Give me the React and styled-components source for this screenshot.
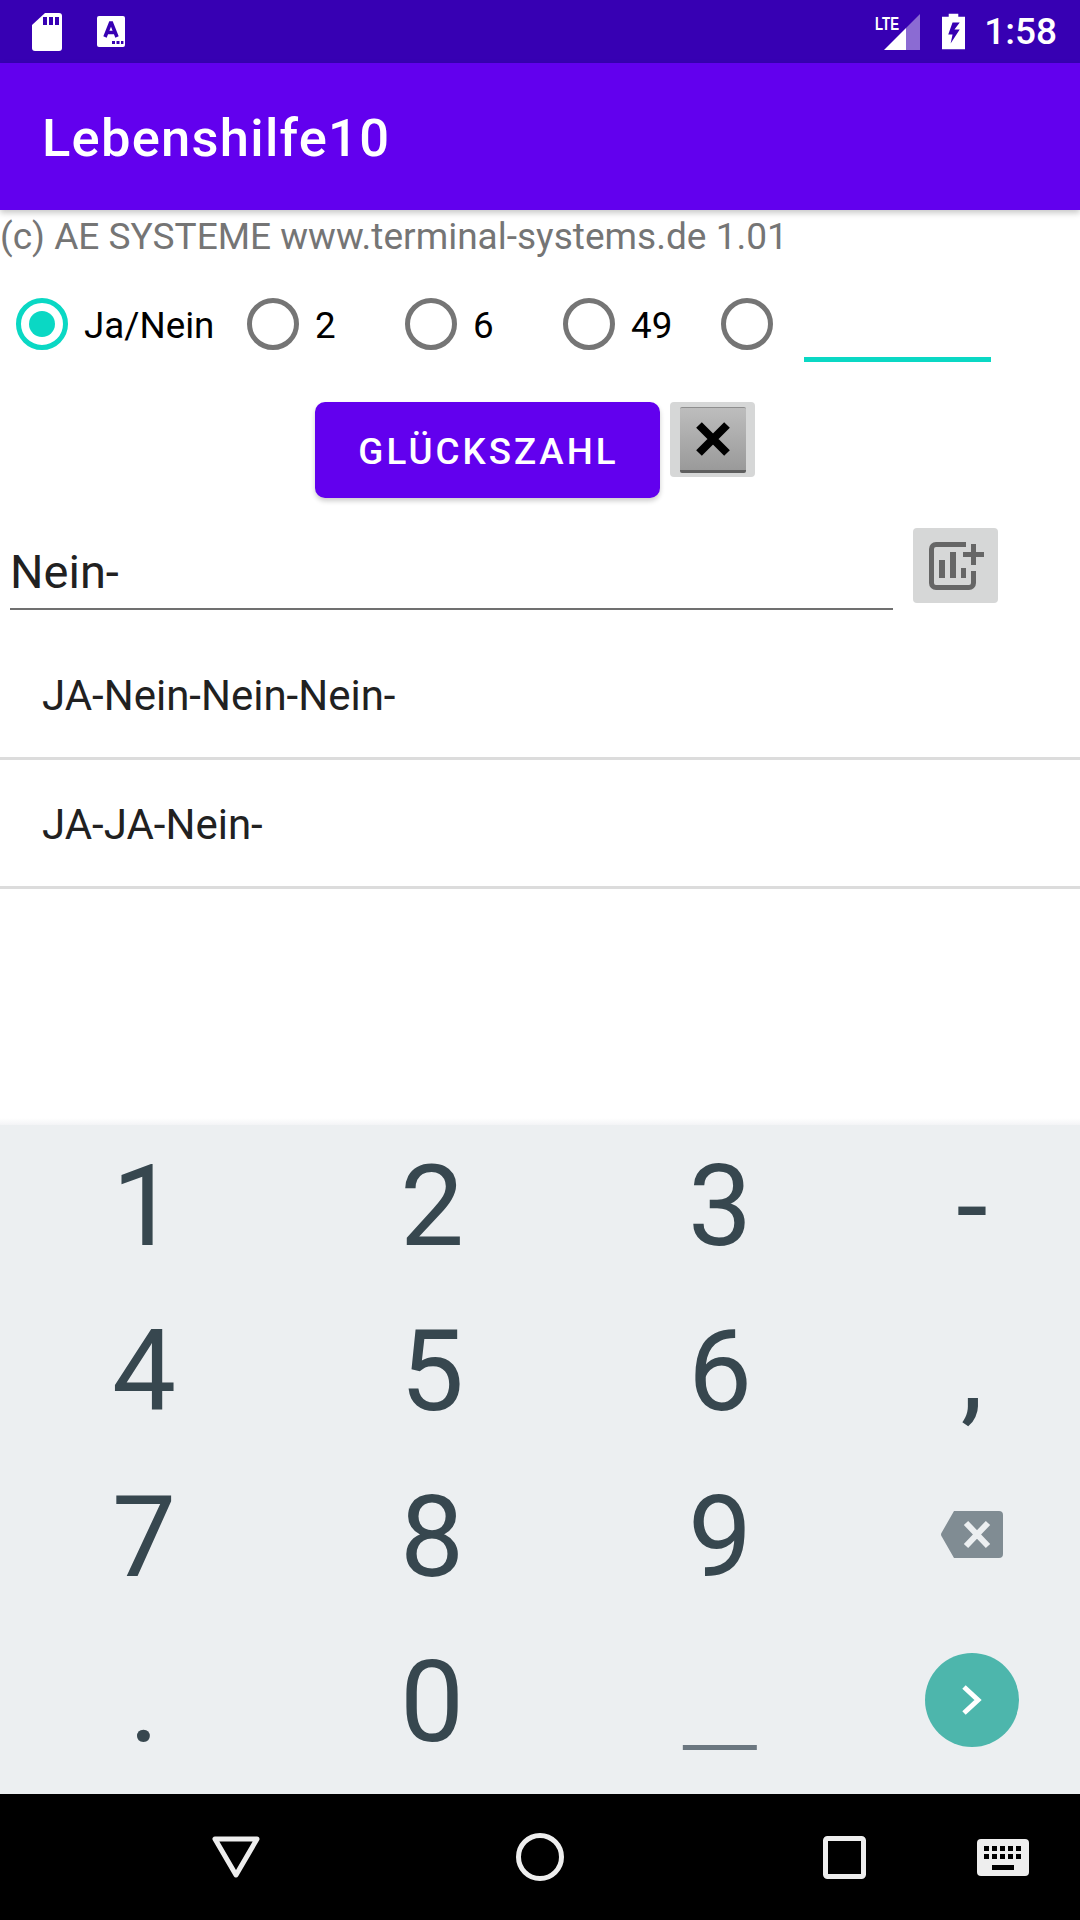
import React from "react";
import styled, { createGlobalStyle } from "styled-components";

const Global = createGlobalStyle`
  html, body { margin: 0; padding: 0; background: #fff; }
  body { font-family: Roboto, "Liberation Sans", sans-serif; }
  * { box-sizing: border-box; }
`;
const Screen = styled.div`
  width: 1080px; height: 1920px; display: flex; flex-direction: column; overflow: hidden; background: #fff;
`;
const StatusBar = styled.div`
  height: 63px; flex: none; background: #3700b3; display: flex; align-items: center; padding: 0 23px 0 32px; color: #fff;
`;
const StatusLeft = styled.div`display: flex; align-items: center; gap: 35px; flex: 1;`;
const StatusTime = styled.span`font-size: 37px; font-weight: 500; margin-left: 19px; line-height: 63px;`;
const StatusIcons = styled.div`display: flex; align-items: center; gap: 22px;`;
const AppBar = styled.div`
  height: 147px; flex: none; background: #6200ee; display: flex; align-items: center; padding: 3px 0 0 42px;
  color: #fff; font-size: 52.5px; font-weight: 500; letter-spacing: 1.25px;
  box-shadow: 0 3px 6px rgba(0,0,0,0.22); position: relative; z-index: 1;
`;
const Content = styled.div`flex: 1; display: flex; flex-direction: column; min-height: 0; background: #fff;`;
const Caption = styled.div`
  font-size: 37.05px; line-height: 44px; color: #757575; padding: 5px 0 0 0; height: 49px; white-space: nowrap;
`;
const RadioRow = styled.div`display: flex; align-items: center; height: 84px; margin-top: 23px;`;
const RadioItem = styled.div`
  display: flex; align-items: center; width: ${p => p.$w}px; flex: none; font-size: 36.75px; color: #000;
`;
const RadioLabel = styled.span`padding-top: 2px;`;
const RadioBox = styled.div`width: 84px; height: 84px; flex: none; display: flex; align-items: center; justify-content: center;`;
const RadioCircle = styled.div`
  width: 52px; height: 52px; border-radius: 50%; border: 5px solid ${p => (p.$on ? "#0ad8c4" : "#757575")};
  display: flex; align-items: center; justify-content: center;
`;
const RadioDot = styled.div`width: 26px; height: 26px; border-radius: 50%; background: #0ad8c4;`;
const Underline = styled.div`width: 187px; height: 5px; background: #0ad8c4; align-self: flex-start; margin: 75px 0 0 15px;`;
const ButtonRow = styled.div`display: flex; margin-top: 36px; padding-left: 315px; gap: 10px; align-items: flex-start;`;
const Primary = styled.div`
  width: 345px; height: 96px; border-radius: 10px; background: #6200ee; color: #fff; font-size: 36.75px; font-weight: 500;
  letter-spacing: 3px; padding: 2px 0 0 2px; display: flex; align-items: center; justify-content: center;
  box-shadow: 0 3px 5px rgba(0,0,0,0.2);
`;
const IconButton = styled.div`
  width: 85px; height: 75px; background: #d6d7d7; border-radius: 4px; display: flex; align-items: center; justify-content: center; flex: none;
`;
const CloseFace = styled.div`
  width: 66px; height: 66px; border-radius: 2px; background: linear-gradient(#bdbdbd, #9a9a9a);
  border-bottom: 3px solid #5e5e5e; border-top: 1px solid #8e8e8e; display: flex; align-items: center; justify-content: center;
`;
const EntryRow = styled.div`display: flex; padding-left: 10px; margin-top: 30px; align-items: flex-start;`;
const Entry = styled.div`
  width: 883px; height: 82px; border-bottom: 2px solid #707070; font-size: 47px; line-height: 88px; color: #212121; flex: none;
`;
const EntryButton = styled(IconButton)`margin-left: 20px; padding-left: 3px;`;
const ListRow = styled.div`
  height: 129px; border-bottom: 3px solid #dcdcdc; padding: 2px 42px 0; font-size: 42px; color: #212121; display: flex; align-items: center;
`;
const List = styled.div`margin-top: 21px;`;
const KeyboardEdge = styled.div`height: 7px; flex: none; background: linear-gradient(#ffffff, #f3f4f6);`;
const Keyboard = styled.div`
  height: 669px; flex: none; background: #eceff1;
  display: grid; grid-template-columns: 288px 288px 288px 216px; grid-template-rows: repeat(4, 165.33px);
`;
const Key = styled.div`
  display: flex; align-items: center; justify-content: center; color: #37474f; font-size: 114px; line-height: 1; padding-bottom: 3px;
`;
const IconKey = styled(Key)`padding-bottom: 7px;`;
const UnderscoreKey = styled(Key)`
  font-family: "Liberation Sans", sans-serif; font-size: 127px; color: #6b7780;
  & > span { display: block; transform: translateY(-12px) scaleY(0.62); transform-origin: 50% 85%; }
`;
const Fab = styled.div`
  width: 94px; height: 94px; border-radius: 50%; background: #4db6ac; display: flex; align-items: center; justify-content: center;
`;
const NavBar = styled.div`
  height: 126px; flex: none; background: #000; display: flex; align-items: center; padding-left: 212px;
`;
const NavIcon = styled.svg`margin-left: ${p => p.$ml || 0}px; flex: none; display: block;`;

const SdIcon = () => (
  <svg width="30" height="38" viewBox="0 0 30 38"><path fill="#fff" d="M13 0h14a3 3 0 0 1 3 3v32a3 3 0 0 1-3 3H3a3 3 0 0 1-3-3V12Z"/><path fill="#3700b3" d="M12 4h4v8h-4zM18 4h4v8h-4zM24 4h4v8h-4z" transform="translate(-1 0)"/></svg>
);
const AIcon = () => (
  <svg width="28" height="31" viewBox="0 0 28 31"><rect width="28" height="31" rx="2" fill="#fff"/><path fill="none" stroke="#3700b3" strokeWidth="3.6" d="M8 21 13.5 7h1L20 21M10 16.5h8"/><path fill="#3700b3" d="M15 25h3v3h-3zM19.5 25h3v3h-3zM24 25h2.4v3H24z"/></svg>
);
const SignalIcon = () => (
  <svg width="45" height="36" viewBox="0 0 45 36"><text x="0" y="16" fill="#fff" fontFamily="'Liberation Sans',sans-serif" fontWeight="700" fontSize="19" textLength="24" lengthAdjust="spacingAndGlyphs">LTE</text><path fill="#fff" d="M9 36 31 14v22Z"/><path fill="#fff" opacity=".42" d="M31 14 45 0v36H31Z"/></svg>
);
const BatteryIcon = () => (
  <svg width="23" height="37" viewBox="0 0 24 37"><path fill="#fff" d="M7 0h10v3h7v34H0V3h7Z"/><path fill="#3700b3" d="M18.500 9H11L6.500 21.500H11L9 31l9.500-14.500H13Z"/></svg>
);
const CloseGlyph = () => (
  <svg width="36" height="36" viewBox="0 0 36 36"><path stroke="#000" strokeWidth="8" d="M4 4 32 32M32 4 4 32"/></svg>
);
const ChartPlus = () => (
  <svg width="56" height="48" viewBox="0 0 56 48">
    <path fill="none" stroke="#666" strokeWidth="5" d="M37 2.500H7A4.500 4.500 0 0 0 2.500 7v34A4.500 4.500 0 0 0 7 45.500h33a4.500 4.500 0 0 0 4.500-4.500V29"/>
    <path fill="#666" d="M10 18h6v18h-6zM21 10h6v26h-6zM32 26h5v10h-5zM42 2h5v8h8v5h-8v8h-5v-8h-8v-5h8z"/>
  </svg>
);
const Backspace = () => (
  <svg width="62" height="47" viewBox="0 0 62 47">
    <path fill="#808c93" d="M13 0h45a4 4 0 0 1 4 4v39a4 4 0 0 1-4 4H13L1 26q-2-2.500 0-5Z"/>
    <path stroke="#eceff1" strokeWidth="6" d="M25 12 47 35M47 12 25 35"/>
  </svg>
);
const Chevron = () => (
  <svg width="24" height="32" viewBox="0 0 24 32"><path fill="none" stroke="#fff" strokeWidth="5" d="M4 3 18 16 4 29"/></svg>
);
const radios = [
  { w: 231, label: "Ja/Nein", on: true },
  { w: 158, label: "2" },
  { w: 158, label: "6" },
  { w: 158, label: "49" },
  { w: 84, label: "" },
];
const rows = ["JA-Nein-Nein-Nein-", "JA-JA-Nein-"];

export default function App() {
  return (
    <Screen>
      <Global />
      <StatusBar>
        <StatusLeft><SdIcon /><AIcon /></StatusLeft>
        <StatusIcons><SignalIcon /><BatteryIcon /></StatusIcons>
        <StatusTime>1:58</StatusTime>
      </StatusBar>
      <AppBar>Lebenshilfe10</AppBar>
      <Content>
        <Caption>(c) AE SYSTEME www.terminal-systems.de 1.01</Caption>
        <RadioRow>
          {radios.map((r, i) => (
            <RadioItem key={i} $w={r.w}>
              <RadioBox><RadioCircle $on={r.on}>{r.on && <RadioDot />}</RadioCircle></RadioBox>
              <RadioLabel>{r.label}</RadioLabel>
            </RadioItem>
          ))}
          <Underline />
        </RadioRow>
        <ButtonRow>
          <Primary>GLÜCKSZAHL</Primary>
          <IconButton><CloseFace><CloseGlyph /></CloseFace></IconButton>
        </ButtonRow>
        <EntryRow>
          <Entry>Nein-</Entry>
          <EntryButton><ChartPlus /></EntryButton>
        </EntryRow>
        <List>{rows.map(r => <ListRow key={r}>{r}</ListRow>)}</List>
      </Content>
      <KeyboardEdge />
      <Keyboard>
        <Key>1</Key><Key>2</Key><Key>3</Key><Key>-</Key>
        <Key>4</Key><Key>5</Key><Key>6</Key><Key>,</Key>
        <Key>7</Key><Key>8</Key><Key>9</Key><IconKey><Backspace /></IconKey>
        <Key>.</Key><Key>0</Key><UnderscoreKey><span>_</span></UnderscoreKey><IconKey><Fab><Chevron /></Fab></IconKey>
      </Keyboard>
      <NavBar>
        <NavIcon width="48" height="42" viewBox="0 0 48 42"><path fill="none" stroke="#eee" strokeWidth="5" strokeLinejoin="round" d="M3 3h42L24 39Z"/></NavIcon>
        <NavIcon $ml={256} width="48" height="48" viewBox="0 0 48 48"><circle cx="24" cy="24" r="21.5" fill="none" stroke="#eee" strokeWidth="5"/></NavIcon>
        <NavIcon $ml={259} width="43" height="43" viewBox="0 0 43 43"><rect x="2.5" y="2.500" width="38" height="38" rx="2" fill="none" stroke="#eee" strokeWidth="5"/></NavIcon>
        <NavIcon $ml={111} width="52" height="37" viewBox="0 0 52 37">
          <rect width="52" height="37" rx="4" fill="#eee"/>
          <path fill="#000" d="M7 7h5v5H7zM15 7h5v5h-5zM23 7h5v5h-5zM31 7h5v5h-5zM39 7h5v5h-5zM7 15h5v5H7zM15 15h5v5h-5zM23 15h5v5h-5zM31 15h5v5h-5zM39 15h5v5h-5zM15 26h22v5H15z"/>
        </NavIcon>
      </NavBar>
    </Screen>
  );
}
